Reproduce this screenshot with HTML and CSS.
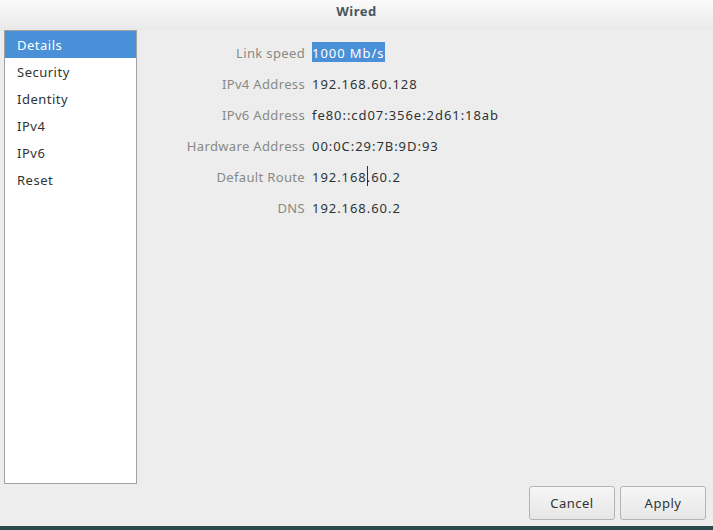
FILE: index.html
```html
<!DOCTYPE html>
<html>
<head>
<meta charset="utf-8">
<link rel="stylesheet" href="styles.css">
</head>
<body>
<div class="window">
  <header class="titlebar">Wired</header>
  <div class="content">
    <ul class="sidebar">
      <li class="item selected">Details</li>
      <li class="item">Security</li>
      <li class="item">Identity</li>
      <li class="item">IPv4</li>
      <li class="item">IPv6</li>
      <li class="item">Reset</li>
    </ul>
    <div class="details">
      <span class="label">Link speed</span><span class="value"><span class="sel">1000 Mb/s</span></span>
      <span class="label">IPv4 Address</span><span class="value">192.168.60.128</span>
      <span class="label">IPv6 Address</span><span class="value">fe80::cd07:356e:2d61:18ab</span>
      <span class="label">Hardware Address</span><span class="value">00:0C:29:7B:9D:93</span>
      <span class="label">Default Route</span><span class="value">192.168<span class="caret"></span>.60.2</span>
      <span class="label">DNS</span><span class="value">192.168.60.2</span>
    </div>
  </div>
  <div class="actions">
    <button class="btn">Cancel</button>
    <button class="btn">Apply</button>
  </div>
</div>
<div class="taskbar"></div>
</body>
</html>
```
FILE: styles.css
```css
html, body {
  margin: 0;
  padding: 0;
}
body {
  width: 713px;
  height: 530px;
  overflow: hidden;
  background: #ededed;
  font-family: "Noto Sans", "Open Sans", sans-serif;
  font-size: 13px;
  color: #2e3436;
}
.window {
  height: 526px;
  display: flex;
  flex-direction: column;
  background: #ededed;
}
.titlebar {
  height: 30px;
  flex: none;
  box-sizing: border-box;
  background: linear-gradient(#fbfbfb, #e9e9e9);
  text-align: center;
  font-weight: bold;
  color: #4a555c;
  line-height: 22px;
  font-size: 13px;
  letter-spacing: 0.5px;
}
.content {
  display: flex;
  padding-left: 4px;
  height: 454px;
  flex: none;
}
.sidebar {
  list-style: none;
  margin: 0;
  padding: 0;
  width: 133px;
  box-sizing: border-box;
  border: 1px solid #a1a1a1;
  background: #ffffff;
  height: 454px;
}
.item {
  height: 27px;
  line-height: 29px;
  padding-left: 12px;
  color: #2e3436;
  letter-spacing: 0.5px;
}
.item.selected {
  background: #4a90d9;
  color: #ffffff;
}
.details {
  display: grid;
  grid-template-columns: 168px auto;
  column-gap: 7px;
  row-gap: 11px;
  align-content: start;
  padding-top: 12px;
}
.label {
  text-align: right;
  color: #888a85;
  line-height: 22px;
  height: 20px;
  letter-spacing: 0.35px;
}
.value {
  color: #2e3436;
  line-height: 22px;
  height: 20px;
  justify-self: start;
  letter-spacing: 0.95px;
}
.sel {
  background: #4a90d9;
  color: #ffffff;
  display: inline-block;
  height: 20px;
  line-height: 22px;
  vertical-align: top;
}
.caret {
  display: inline-block;
  width: 1px;
  height: 20px;
  background: #2e3436;
  vertical-align: top;
  margin-right: -1px;
}
.actions {
  display: flex;
  justify-content: flex-end;
  gap: 5px;
  padding: 2px 7px 0 0;
}
.btn {
  width: 86px;
  height: 34px;
  border: 1px solid #b4b4b1;
  border-radius: 3px;
  background: linear-gradient(#f6f6f6, #e6e6e6);
  font-family: inherit;
  font-size: 13px;
  color: #2e3436;
  padding: 0;
  letter-spacing: 0.5px;
}
.taskbar {
  height: 4px;
  background: #2a4a4c;
}
```
